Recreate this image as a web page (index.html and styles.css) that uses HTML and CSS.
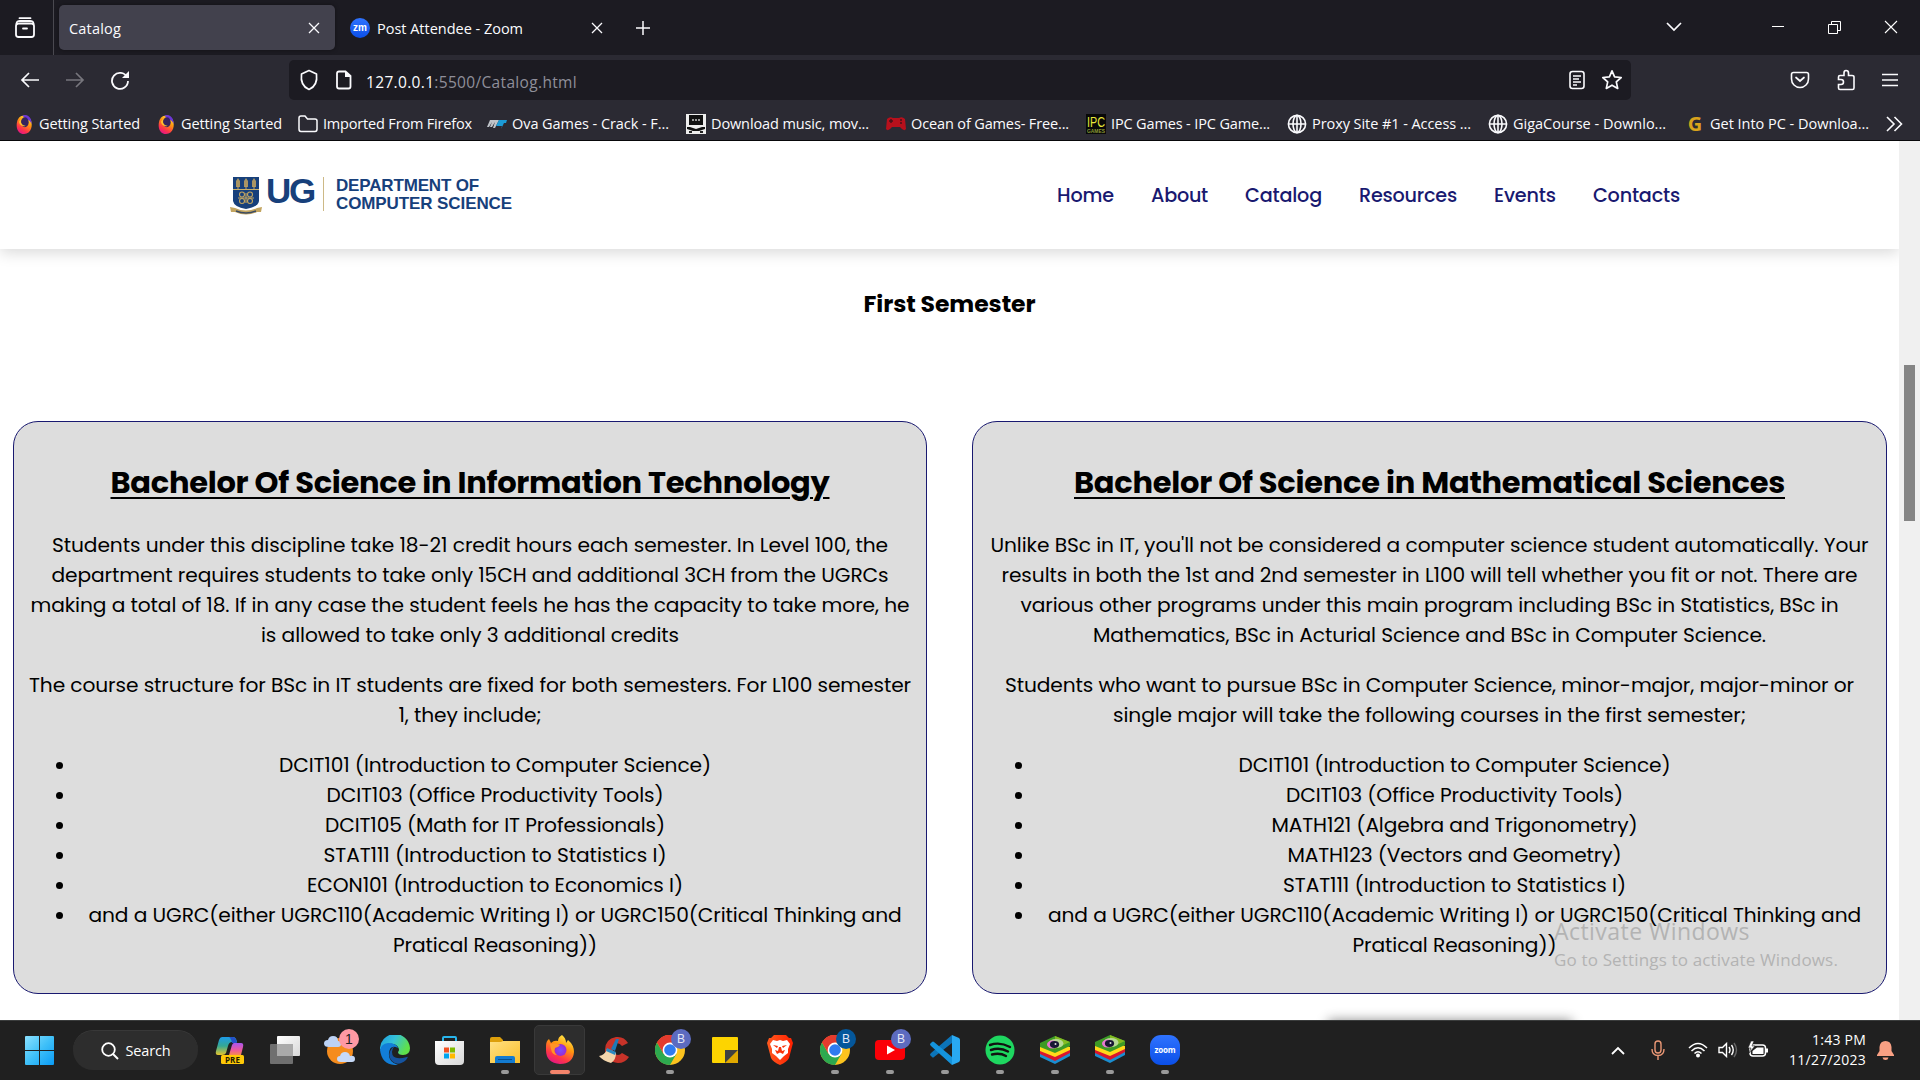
FILE: index.html
```html
<!DOCTYPE html>
<html lang="en">
<head>
<meta charset="utf-8">
<title>Catalog</title>
<link rel="stylesheet" href="styles.css">
</head>
<body>
<svg class="defs" width="0" height="0">
  <defs>
    <linearGradient id="gWin" x1="0" y1="0" x2="1" y2="1"><stop offset="0" stop-color="#8be1ff"/><stop offset=".5" stop-color="#3fc0f8"/><stop offset="1" stop-color="#0a9bf5"/></linearGradient>
    <linearGradient id="gFox" x1=".8" y1="0" x2=".3" y2="1"><stop offset="0" stop-color="#fff44f"/><stop offset=".4" stop-color="#ff980e"/><stop offset=".75" stop-color="#ff3647"/><stop offset="1" stop-color="#e31587"/></linearGradient>
    <radialGradient id="gOrb"><stop offset="0" stop-color="#7b4dff"/><stop offset="1" stop-color="#9a2bd0"/></radialGradient>
    <linearGradient id="gEdge" x1="0" y1="0" x2="1" y2=".4"><stop offset="0" stop-color="#1b9de2"/><stop offset=".5" stop-color="#35c1d8"/><stop offset="1" stop-color="#5fe04a"/></linearGradient>
    <linearGradient id="gCopA" x1="0" y1="0" x2="0" y2="1"><stop offset="0" stop-color="#1d9be8"/><stop offset=".5" stop-color="#35a894"/><stop offset="1" stop-color="#e6c52c"/></linearGradient>
    <linearGradient id="gCopB" x1="0" y1="0" x2="0" y2="1"><stop offset="0" stop-color="#a855f0"/><stop offset=".6" stop-color="#ee5a9a"/><stop offset="1" stop-color="#f58a50"/></linearGradient>
    <linearGradient id="gFolder" x1="0" y1="0" x2="1" y2="1"><stop offset="0" stop-color="#ffe083"/><stop offset="1" stop-color="#fbc02c"/></linearGradient>
    <linearGradient id="gGrey" x1="0" y1="0" x2="1" y2="1"><stop offset="0" stop-color="#fff"/><stop offset="1" stop-color="#d8d8d8"/></linearGradient>
    <linearGradient id="gZoom" x1="0" y1="0" x2="0" y2="1"><stop offset="0" stop-color="#2f73ff"/><stop offset="1" stop-color="#0b4fe8"/></linearGradient>
    <linearGradient id="gBrave" x1="0" y1="0" x2="1" y2="0"><stop offset="0" stop-color="#ff5a1f"/><stop offset="1" stop-color="#ff2000"/></linearGradient>
    <symbol id="foxmini" viewBox="0 0 20 24"><path d="M3 6C0 11 0 24 10 24C19 24 21 13 18 7C16 3 13 1 9 2C6 2 4 4 3 6Z" fill="url(#gFox)"/><path d="M8 2C13-1 20 4 19 12C18 9 16 7 14 7Z" fill="#6b35d9"/><ellipse cx="11" cy="10" rx="4.6" ry="6" fill="#35245c"/><path d="M7 5C5 9 7 14 12 14C9 16 4 13 4 9Z" fill="#ffc12e"/></symbol>
    <symbol id="globe" viewBox="0 0 20 20"><g fill="none" stroke="#fbfbfe" stroke-width="1.6"><circle cx="10" cy="10" r="8.6"/><ellipse cx="10" cy="10" rx="4" ry="8.6"/><path d="M1.5 10H18.5M10 1.5V18.5"/></g></symbol>
    <symbol id="cross" viewBox="0 0 12 12"><path d="M1 1L11 11M11 1L1 11" stroke="#fbfbfe" stroke-width="1.3" fill="none"/></symbol>
    <symbol id="chrome" viewBox="0 0 30 30"><circle cx="15" cy="15" r="15" fill="#fcc31e"/><path d="M15 15L2 7.5A15 15 0 0 1 28 7.5H15Z" fill="#e33b2e"/><path d="M2 7.5A15 15 0 0 0 15 30L21.5 18.7L15 15L8.5 18.7Z" fill="#2da94f"/><path d="M15 7.5H28A15 15 0 0 0 2 7.5L8.5 18.7Z" fill="#e33b2e"/><circle cx="15" cy="15" r="7.4" fill="#fff"/><circle cx="15" cy="15" r="5.8" fill="#2f7bf0"/></symbol>
    <symbol id="stacks" viewBox="0 0 30 28"><path d="M0 17L15 11L30 17V20L15 28L0 21Z" fill="#1b8ed0"/><path d="M0 14L15 8L30 14V17L15 25L0 18Z" fill="#d9162d"/><path d="M0 11L15 5L30 11V14L15 21L0 15Z" fill="#ffd91a"/><path d="M0 7L15 0L30 6V10L15 17L0 11Z" fill="#3d9b25"/><path d="M15 0L30 6L15 13Z" fill="#83bb22"/><ellipse cx="16" cy="7.5" rx="7.5" ry="4.600" fill="#b7d995"/><ellipse cx="12.500" cy="8.500" rx="5.500" ry="4" fill="#e67ad0"/><ellipse cx="14.500" cy="8.500" rx="4.600" ry="3.400" fill="#171733"/><circle cx="15.500" cy="8" r="1" fill="#ddd"/></symbol>
  </defs>
</svg>

<div class="tabbar">
  <div class="archive"><svg width="22" height="22" viewBox="0 0 22 22"><g fill="none" stroke="#fbfbfe" stroke-width="1.8" stroke-linecap="round"><rect x="2" y="6.5" width="18" height="13.5" rx="2.5"/><path d="M2.5 6.5C3 4 4 4 6 4H16C18 4 19 4 19.5 6.5M5.5 1.2H16.5M9 11.5H13"/></g></svg></div>
  <div class="tab active"><span class="tabtext" data-w="52">Catalog</span><svg class="x" width="12" height="12"><use href="#cross"/></svg></div>
  <div class="tab second"><svg width="20" height="20" viewBox="0 0 20 20"><circle cx="10" cy="10" r="10" fill="url(#gZoom)"/><text x="10" y="13" text-anchor="middle" class="zm">zm</text></svg><span class="tabtext" data-w="146">Post Attendee - Zoom</span><svg class="x" width="12" height="12"><use href="#cross"/></svg></div>
  <svg class="plus" width="16" height="16" viewBox="0 0 16 16"><path d="M8 1V15M1 8H15" stroke="#fbfbfe" stroke-width="1.5"/></svg>
  <div class="wincontrols">
    <svg width="16" height="10" viewBox="0 0 16 10"><path d="M1 1L8 8L15 1" fill="none" stroke="#fbfbfe" stroke-width="1.7"/></svg>
    <svg width="12" height="12" viewBox="0 0 12 12"><path d="M0 5.5H12" stroke="#fff"/></svg>
    <svg width="13" height="13" viewBox="0 0 13 13"><path d="M.5 3.5H9.5V12.5H.5ZM3.5 3.5V.5H12.5V9.5H9.5" fill="none" stroke="#fff"/></svg>
    <svg width="14" height="14" viewBox="0 0 14 14"><path d="M1 1L13 13M13 1L1 13" stroke="#fff" stroke-width="1.1"/></svg>
  </div>
</div>

<div class="navbar">
  <div class="navleft">
    <svg width="20" height="20" viewBox="0 0 20 20"><path d="M19 10H2M9 3L2 10L9 17" fill="none" stroke="#fbfbfe" stroke-width="1.7"/></svg>
    <svg width="20" height="20" viewBox="0 0 20 20"><path d="M1 10H18M11 3L18 10L11 17" fill="none" stroke="#77767d" stroke-width="1.7"/></svg>
    <svg width="20" height="20" viewBox="0 0 20 20"><path d="M17 7A8 8 0 1 0 18 11" fill="none" stroke="#fbfbfe" stroke-width="1.8"/><path d="M19 1V8H12Z" fill="#fbfbfe"/></svg>
  </div>
  <div class="urlbar">
    <svg width="20" height="22" viewBox="0 0 20 22"><path d="M10 1.5L17.5 5C18.5 13 16 18 10 20.5C4 18 1.500 13 2.500 5Z" fill="none" stroke="#fbfbfe" stroke-width="1.7" stroke-linejoin="round"/></svg>
    <svg class="page" width="16" height="20" viewBox="0 0 16 20"><path d="M3 1.500H9.500L14.500 6V16.500Q14.500 18.500 12.500 18.500H3Q1 18.500 1 16.500V3.500Q1 1.500 3 1.500Z" fill="none" stroke="#fbfbfe" stroke-width="1.8"/><path d="M9 1V7H15Z" fill="#fbfbfe"/></svg>
    <span class="url" data-w="211"><b>127.0.0.1</b>:5500/Catalog.html</span>
    <svg class="reader" width="16" height="20" viewBox="0 0 16 20"><rect x="1" y="1.500" width="14" height="17" rx="2.500" fill="none" stroke="#fbfbfe" stroke-width="1.600"/><path d="M4 6H12M4 9H10M4 12H12M4 15H8" stroke="#fbfbfe" stroke-width="1.300"/></svg>
    <svg width="22" height="22" viewBox="0 0 22 22"><path d="M11 1.800L13.600 7.800L20.200 8.500L15.300 12.900L16.700 19.400L11 16.200L5.300 19.400L6.700 12.900L1.800 8.500L8.400 7.800Z" fill="none" stroke="#fbfbfe" stroke-width="1.700" stroke-linejoin="round"/></svg>
  </div>
  <div class="navright">
    <svg width="20" height="18" viewBox="0 0 20 18"><path d="M3.500 1.500H16.500Q18.500 1.500 18.500 3.500V8A8.500 8.500 0 0 1 1.500 8V3.500Q1.500 1.500 3.500 1.500Z" fill="none" stroke="#fbfbfe" stroke-width="1.600"/><path d="M6 6.500L10 10L14 6.500" fill="none" stroke="#fbfbfe" stroke-width="1.700" stroke-linecap="round"/></svg>
    <svg width="20" height="22" viewBox="0 0 20 22"><path d="M4 20.500Q2.500 20.500 2.500 19V15.500H5Q7.500 15.500 7.500 13Q7.500 10.500 5 10.500H2.500V8Q2.500 6.500 4 6.500H8V4Q8 1.500 10 1.500Q12.500 1.500 12.500 4V6.500H16Q18 6.500 18 8V19Q18 20.500 16.500 20.500Z" fill="none" stroke="#fbfbfe" stroke-width="1.600"/></svg>
    <svg width="16" height="14" viewBox="0 0 16 14"><path d="M0 1.500H16M0 7H16M0 12.500H16" stroke="#fbfbfe" stroke-width="1.500"/></svg>
  </div>
</div>

<div class="bookmarks">
  <div class="bm"><svg width="20" height="20"><use href="#foxmini"/></svg><span data-w="101">Getting Started</span></div>
  <div class="bm"><svg width="20" height="20"><use href="#foxmini"/></svg><span data-w="101">Getting Started</span></div>
  <div class="bm folder"><svg width="20" height="20" viewBox="0 0 20 20"><path d="M1 15V4Q1 2 3 2H7L9.500 5H17Q19 5 19 7V15Q19 17.500 17 17.500H3Q1 17.500 1 15Z" fill="none" stroke="#fbfbfe" stroke-width="1.500"/></svg><span data-w="149">Imported From Firefox</span></div>
  <div class="bm"><svg width="20" height="20" viewBox="0 0 20 20"><path d="M3 6H12L8 14H6L8 8L5 13H3L5 8L2 13H0Z" fill="#bfc3c9"/><path d="M12 6H20L19 9H17L14 15L15 12H9Z" fill="#1b9bd7"/></svg><span data-w="157">Ova Games - Crack - F...</span></div>
  <div class="bm"><svg width="20" height="20" viewBox="0 0 20 20"><path d="M0 0H20V20H0Z" fill="#eee"/><path d="M3 1H17V11H3ZM1 13H4L10 15L16 13H19V15L13 17H7L1 15Z" fill="#111"/><path d="M6 5H8V7H6ZM9 5H11V7H9ZM12 5H14V7H12Z" fill="#999"/><path d="M3 17H6V19H3ZM14 17H17V19H14Z" fill="#222"/></svg><span data-w="158">Download music, mov...</span></div>
  <div class="bm"><svg width="20" height="20" viewBox="0 0 20 20"><path d="M1 5Q4 2 7 4H13Q16 2 19 5L20 15Q18 18 14 13H6Q2 18 0 15Z" fill="#b8101c"/><path d="M3 7H7M5 5V9M14 6H16M14 9H16" stroke="#4b101a" stroke-width="1.500"/></svg><span data-w="158">Ocean of Games- Free...</span></div>
  <div class="bm"><svg width="20" height="20" viewBox="0 0 20 20"><path d="M0 0H20V20H0Z" fill="#080808"/><text x="1" y="13" class="ipc" textLength="18" lengthAdjust="spacingAndGlyphs">IPC</text><text x="1" y="18.500" class="ipcs" textLength="18" lengthAdjust="spacingAndGlyphs">GAMES</text></svg><span data-w="159">IPC Games - IPC Game...</span></div>
  <div class="bm"><svg width="20" height="20"><use href="#globe"/></svg><span data-w="159">Proxy Site #1 - Access ...</span></div>
  <div class="bm giga"><svg width="20" height="20"><use href="#globe"/></svg><span data-w="153">GigaCourse - Downlo...</span></div>
  <div class="bm"><b class="gicon">G</b><span data-w="159">Get Into PC - Downloa...</span></div>
  <svg class="more" width="17" height="16" viewBox="0 0 17 16"><path d="M1 1L8 8L1 15M8.500 1L15.500 8L8.500 15" fill="none" stroke="#fbfbfe" stroke-width="1.600"/></svg>
</div>

<div class="viewport">
  <div class="content">
    <header class="site">
      <div class="logo">
        <svg width="32" height="38" viewBox="0 0 32 38"><path d="M3 0H29V24Q28 30 16 32Q4 30 3 24Z" fill="#17407b"/><path d="M3 12.500H29" stroke="#c8b06c" stroke-width="1"/><g fill="#c3a560"><path d="M8 1L10 4L10 10H6V4ZM16 1L18 4V10H14V4ZM24 1L26 4V10H22V4Z" opacity=".85"/><path d="M7.500 9H8.500V12H7.500ZM15.500 9H16.500V12H15.500ZM23.500 9H24.500V12H23.500Z"/></g><g fill="none" stroke="#c3a560" stroke-width="1.100"><circle cx="12" cy="17.500" r="2.500"/><circle cx="20" cy="17.500" r="2.500"/><circle cx="12" cy="24" r="2.500"/><circle cx="20" cy="24" r="2.500"/><path d="M8 21H24M16 16V26"/></g><path d="M0 30L5 31Q16 36 27 31L32 30L31 35L27 35Q16 40 5 35L1 35Z" fill="#c3a560"/><path d="M6 34Q16 38 26 34" fill="none" stroke="#3b4b63" stroke-width="1.500"/></svg>
        <span class="ug" data-w="48">UG</span>
        <div class="dept"><span data-w="143">DEPARTMENT OF</span><br><span data-w="176">COMPUTER SCIENCE</span></div>
      </div>
      <nav>
        <a data-w="57">Home</a><a data-w="57">About</a><a data-w="77">Catalog</a><a data-w="98">Resources</a><a data-w="62">Events</a><a data-w="87">Contacts</a>
      </nav>
    </header>
    <h3><span data-w="172">First Semester</span></h3>
    <main class="cards">
      <section class="card">
        <h2><span data-w="719">Bachelor Of Science in Information Technology</span></h2>
        <p><span data-w="836">Students under this discipline take 18-21 credit hours each semester. In Level 100, the</span><br>
        <span data-w="837">department requires students to take only 15CH and additional 3CH from the UGRCs</span><br>
        <span data-w="879">making a total of 18. If in any case the student feels he has the capacity to take more, he</span><br>
        <span data-w="418">is allowed to take only 3 additional credits</span></p>
        <p><span data-w="882">The course structure for BSc in IT students are fixed for both semesters. For L100 semester</span><br>
        <span data-w="143">1, they include;</span></p>
        <ul>
          <li><span data-w="432">DCIT101 (Introduction to Computer Science)</span></li>
          <li><span data-w="337">DCIT103 (Office Productivity Tools)</span></li>
          <li><span data-w="340">DCIT105 (Math for IT Professionals)</span></li>
          <li><span data-w="343">STAT111 (Introduction to Statistics I)</span></li>
          <li><span data-w="376">ECON101 (Introduction to Economics I)</span></li>
          <li><span data-w="813">and a UGRC(either UGRC110(Academic Writing I) or UGRC150(Critical Thinking and</span><br><span data-w="204">Pratical Reasoning))</span></li>
        </ul>
      </section>
      <section class="card">
        <h2><span data-w="711">Bachelor Of Science in Mathematical Sciences</span></h2>
        <p><span data-w="878">Unlike BSc in IT, you'll not be considered a computer science student automatically. Your</span><br>
        <span data-w="856">results in both the 1st and 2nd semester in L100 will tell whether you fit or not. There are</span><br>
        <span data-w="818">various other programs under this main program including BSc in Statistics, BSc in</span><br>
        <span data-w="673">Mathematics, BSc in Acturial Science and BSc in Computer Science.</span></p>
        <p><span data-w="849">Students who want to pursue BSc in Computer Science, minor-major, major-minor or</span><br>
        <span data-w="633">single major will take the following courses in the first semester;</span></p>
        <ul>
          <li><span data-w="432">DCIT101 (Introduction to Computer Science)</span></li>
          <li><span data-w="337">DCIT103 (Office Productivity Tools)</span></li>
          <li><span data-w="366">MATH121 (Algebra and Trigonometry)</span></li>
          <li><span data-w="334">MATH123 (Vectors and Geometry)</span></li>
          <li><span data-w="343">STAT111 (Introduction to Statistics I)</span></li>
          <li><span data-w="813">and a UGRC(either UGRC110(Academic Writing I) or UGRC150(Critical Thinking and</span><br><span data-w="204">Pratical Reasoning))</span></li>
        </ul>
      </section>
    </main>
    <div class="nextbox"></div>
  </div>
  <div class="scroll"><div class="thumb"></div></div>
  <div class="watermark"><div class="wm1"><span data-w="196">Activate Windows</span></div><div class="wm2"><span data-w="284">Go to Settings to activate Windows.</span></div></div>
</div>

<footer class="taskbar">
  <div class="app"><svg width="29" height="29" viewBox="0 0 29 29"><path d="M0 1Q0 0 1 0H14V14H0ZM15 0H28Q29 0 29 1V14H15ZM0 15H14V29H1Q0 29 0 28ZM15 15H29V28Q29 29 28 29H15Z" fill="url(#gWin)"/></svg></div>
  <div class="search"><svg width="18" height="18" viewBox="0 0 18 18"><circle cx="7.500" cy="7.500" r="6.300" fill="none" stroke="#fff" stroke-width="1.800"/><path d="M12 12L17 17" stroke="#fff" stroke-width="2"/></svg><span data-w="45">Search</span></div>
  <div class="app"><svg width="30" height="30" viewBox="0 0 30 30"><path d="M7 2H18Q21 2 22 7H17Q14 7 13 11L11 18Q10 20 7 20H3Q0 20 1 16L4 5Q5 2 7 2Z" fill="url(#gCopA)"/><path d="M14 2H18Q21 2 22 8H17Q16 3 14 2Z" fill="#2450c8"/><path d="M19 8H26Q29 8 28 12L26 20H14L17 10Q18 8 19 8Z" fill="url(#gCopB)"/><rect x="6" y="20" width="23" height="9" rx="1.500" fill="#ffc907"/><text x="17.500" y="27.500" text-anchor="middle" class="pre">PRE</text></svg></div>
  <div class="app"><svg width="30" height="28" viewBox="0 0 30 28"><rect x="7" y="0" width="23" height="20" rx="1" fill="url(#gGrey)"/><rect x="0" y="8" width="23" height="20" rx="1" fill="#6f6f6f"/><path d="M7 8H23V20H7Z" fill="#aaa"/></svg></div>
  <div class="app"><svg width="32" height="30" viewBox="0 0 32 30"><circle cx="16" cy="16" r="13" fill="#f58c1d"/><path d="M5 12Q0 12 0 8.500Q0 5 4 5Q5 1 9 1Q14 1 14 6Q17 6 17 9Q17 12 14 12Z" fill="#bcd2f5"/><path d="M17 27Q13 27 13 24Q13 21 16 21Q17 17 21 17Q25 17 26 21Q31 20 31 24Q31 27 28 27Z" fill="#c6d9f8"/></svg><b class="badge pink">1</b></div>
  <div class="app"><svg width="30" height="30" viewBox="0 0 30 30"><path d="M0 15A15 15 0 0 1 30 13Q30 20 23 20Q18 20 18 17Q20 15 18 12Q15 8 9 9Q3 10 0 15Z" fill="url(#gEdge)"/><path d="M0 15Q1 9 8 8Q16 8 18 13Q10 9 9 18Q8 27 18 30Q2 31 0 15Z" fill="#127ed8"/><path d="M13 12Q6 20 12 26Q18 32 26 25Q29 21 27 22Q12 26 12 17Q12 14 14 12Z" fill="#15539f"/></svg></div>
  <div class="app"><svg width="29" height="29" viewBox="0 0 29 29"><path d="M8 7V2Q8 1 9 1H20Q21 1 21 2V7" fill="none" stroke="#28b5ec" stroke-width="2"/><path d="M0 5H29V25Q29 29 25 29H4Q0 29 0 25Z" fill="url(#gGrey)"/><path d="M9 11.500H14V16.500H9Z" fill="#f25022"/><path d="M15 11.500H20V16.500H15Z" fill="#7fba00"/><path d="M9 17.500H14V22.500H9Z" fill="#00a4ef"/><path d="M15 17.500H20V22.500H15Z" fill="#ffb900"/></svg></div>
  <div class="app"><svg width="30" height="26" viewBox="0 0 30 26"><path d="M0 2Q0 0 2 0H10L13 3V8H0Z" fill="#dd9f0b"/><path d="M0 5H11L13 4H30V26H0Z" fill="url(#gFolder)"/><path d="M5 26V21Q5 19 7 19H23Q25 19 25 21V26Z" fill="#137bd0"/><path d="M8 22.500H22" stroke="#07508f"/></svg><i class="dot"></i></div>
  <div class="app current"><svg width="30" height="30" viewBox="0 0 30 30"><path d="M1 11Q1 6 4 4L6 8Q9 5 13 6Q13 2 17 0Q21 3 21 8L23 5Q29 10 29 17Q28 29 15 29Q1 28 1 15Z" fill="url(#gFox)"/><circle cx="15.500" cy="15" r="6" fill="url(#gOrb)"/><path d="M5 9Q8 8 12 9L15 10Q14 12 10 13Q8 17 12 20Q7 20 6 14Z" fill="#ff9426"/></svg><i class="dot"></i></div>
  <div class="app"><svg width="31" height="30" viewBox="0 0 31 30"><path d="M29 8Q25 1 17 2Q6 4 6 15Q7 27 19 28Q26 28 30 22L23 18Q19 22 15 18Q12 12 16 9Q20 7 23 11Z" fill="#c83329"/><path d="M17 4L20 4L16 16L12 14Z" fill="#1c7bb8"/><path d="M8 14L17 18Q17 25 12 28Q4 26 0 21Q6 20 8 14Z" fill="#f3d6ac"/><path d="M8 13L17 17L16 20L7 16Z" fill="#2d8bc2"/></svg></div>
  <div class="app"><svg width="30" height="30"><use href="#chrome"/></svg><b class="badge">B</b><i class="dot"></i></div>
  <div class="app"><svg width="26" height="26" viewBox="0 0 26 26"><rect width="26" height="26" rx="1" fill="#fdd400"/><path d="M13 26L26 13V26Z" fill="#e0a800"/><path d="M13 13H26L13 26Z" fill="#404040"/></svg></div>
  <div class="app"><svg width="26" height="30" viewBox="0 0 26 30"><path d="M7 0H19L22 3L24 3L26 8L22 23Q20 27 13 30Q6 27 4 23L0 8L2 3L4 3Z" fill="url(#gBrave)"/><path d="M6 5L10 6L13 5L16 6L20 5L23 9L21 14L21 18L17 21L13 25L9 21L5 18L5 14L3 9Z" fill="#fff"/><path d="M6 10L11 11L10 13ZM20 10L15 11L16 13ZM12 12H14L15 16L18 15L16 19L13 17.500L10 19L8 15L11 16Z" fill="#f8330a"/></svg></div>
  <div class="app"><svg width="30" height="30"><use href="#chrome"/></svg><b class="badge blue">B</b><i class="dot"></i></div>
  <div class="app"><svg width="30" height="22" viewBox="0 0 30 22"><rect y="1" width="30" height="20" rx="4" fill="#fb0007"/><path d="M12 6.500L20 11L12 15.500Z" fill="#fff"/></svg><b class="badge">B</b><i class="dot"></i></div>
  <div class="app"><svg width="30" height="30" viewBox="0 0 30 30"><path d="M22 0L29 3Q30 4 30 5V25Q30 26 29 27L22 30Z" fill="#29a9f2"/><path d="M22 0V8L4 22Q3 23 2 22L0 20Q0 19 1 18Z" fill="#0c74b8"/><path d="M22 30V22L4 7Q3 6 2 7L0 9Q0 10 1 11Z" fill="#1493dc"/></svg><i class="dot"></i></div>
  <div class="app"><svg width="30" height="30" viewBox="0 0 30 30"><circle cx="15" cy="15" r="14.500" fill="#1ed760"/><path d="M5 10Q15 6.500 25 12M6 15Q15 12 23 16.500M7 19.500Q15 17.500 21 21" fill="none" stroke="#111" stroke-width="2.400" stroke-linecap="round"/></svg><i class="dot"></i></div>
  <div class="app"><svg width="30" height="28"><use href="#stacks"/></svg><i class="dot"></i></div>
  <div class="app"><svg class="up" width="30" height="28"><use href="#stacks"/></svg><i class="dot"></i></div>
  <div class="app"><svg width="30" height="30" viewBox="0 0 30 30"><rect width="30" height="30" rx="11" fill="url(#gZoom)"/><text x="15" y="17.500" text-anchor="middle" class="zoom" textLength="21">zoom</text></svg><i class="dot"></i></div>
  <div class="tray">
    <svg class="caret" width="14" height="9" viewBox="0 0 14 9"><path d="M1 8L7 2L13 8" fill="none" stroke="#fff" stroke-width="1.800"/></svg>
    <svg class="mic" width="14" height="20" viewBox="0 0 14 20"><g fill="none" stroke="#eb9876" stroke-width="1.400"><rect x="4" y="1" width="6" height="12" rx="3"/><path d="M1 9Q1 15.500 7 15.500Q13 15.500 13 9M7 15.500V20"/></g></svg>
    <svg class="wifi" width="20" height="16" viewBox="0 0 20 16"><g fill="none" stroke="#fff" stroke-width="1.500"><path d="M1 6Q10-3 19 6M3.500 9Q10 2.500 16.500 9M6.500 11.500Q10 8 13.500 11.500"/></g><circle cx="10" cy="13.500" r="2" fill="#fff"/></svg>
    <svg class="vol" width="20" height="16" viewBox="0 0 20 16"><g fill="none" stroke="#fff" stroke-width="1.400"><path d="M1 5.500H4.500L8.500 1.500V14.500L4.500 10.500H1ZM11 5Q13 8 11 11M13.500 3Q17 8 13.500 13"/><path d="M16 1Q21 8 16 15" stroke="#666"/></g></svg>
    <svg class="bat" width="20" height="18" viewBox="0 0 20 18"><rect x="2" y="4" width="15.500" height="11" rx="3" fill="none" stroke="#fff" stroke-width="1.500"/><path d="M4.500 13V10L9 6.500H15.500V13ZM18 7.500H20V11.500H18Z" fill="#fff"/><path d="M3 0L0 7H3L1 12L7 5H4L6 0Z" fill="#fff" stroke="#202020" stroke-width=".6"/></svg>
    <div class="clock"><span data-w="54">1:43 PM</span><span data-w="77">11/27/2023</span></div>
    <svg class="bell" width="17" height="19" viewBox="0 0 17 19"><path d="M8.500 0Q14 0 14.500 6V10L17 14V15H0V14L2.500 10V6Q3 0 8.500 0ZM5.500 16.500H11.500Q11 19 8.500 19Q6 19 5.500 16.500Z" fill="#f9a083"/></svg>
  </div>
</footer>
<script src="fit.js"></script>
</body>
</html>
```
FILE: styles.css
```css
* { box-sizing: border-box; }
body { margin: 0; width: 1920px; height: 1080px; overflow: hidden; display: flex; flex-direction: column; background: #fff; font-family: "Open Sans", "Noto Sans", sans-serif; font-size: 14.5px; color: #fbfbfe; }
svg { display: block; flex: none; }
.defs { position: absolute; }
[data-w] { display: inline-block; white-space: nowrap; }

.tabbar { height: 55px; flex: none; background: #1c1b22; display: flex; align-items: center; }
.archive { width: 54px; height: 55px; border-right: 1px solid #4a4950; display: flex; align-items: center; padding-left: 14px; }
.tab { height: 45px; display: flex; align-items: center; border-radius: 5px; }
.tab.active { margin-left: 5px; width: 276px; padding: 0 15px 0 10px; background: #42414d; box-shadow: 0 0 4px rgba(0,0,0,.4); }
.tab.second { margin-left: 4px; width: 276px; padding: 0 12px 0 11px; gap: 7px; }
.tabtext { padding-top: 2px; }
.tab .x { margin-left: auto; }
.zm { font: bold 10px "Liberation Sans", sans-serif; fill: #fff; }
.plus { margin-left: 20px; }
.wincontrols { margin-left: auto; display: flex; align-items: center; padding: 0 22px 1px 0; }
.wincontrols svg:nth-child(2) { margin-left: 90px; }
.wincontrols svg:nth-child(3) { margin-left: 44px; }
.wincontrols svg:nth-child(4) { margin-left: 43px; }

.navbar { height: 50px; flex: none; background: #2b2a33; display: flex; align-items: center; }
.navleft { width: 289px; display: flex; gap: 25px; padding-left: 20px; }
.urlbar { width: 1342px; height: 40px; border-radius: 5px; background: #1c1b22; display: flex; align-items: center; padding: 0 8px 0 10px; }
.page { margin-left: 17px; }
.url { margin-left: 14px; font-size: 15.5px; color: #8f8f9a; padding-top: 4px; }
.url b { font-weight: 400; color: #fbfbfe; }
.reader { margin: 0 16px 0 auto; }
.navright { display: flex; align-items: center; gap: 26px; padding-left: 159px; }

.bookmarks { height: 36px; flex: none; background: #2b2a33; border-bottom: 1px solid #08080a; display: flex; align-items: center; padding: 2px 17px 0 14px; gap: 16px; }
.bm { display: flex; align-items: center; gap: 5px; }
.bookmarks .bm:nth-child(n+4) { margin-right: 1px; }
.bookmarks .folder { margin-right: -1px; }
.giga { width: 187px; }
.more { margin-left: auto; }
.ipc { font: 14px "Liberation Sans", sans-serif; fill: #e9e83a; }
.ipcs { font: bold 5px "Liberation Sans", sans-serif; fill: #8a9a35; }
.gicon { width: 20px; font-size: 20px; line-height: 28px; color: #d9a31c; text-align: center; }

.viewport { position: relative; height: 879px; flex: none; display: flex; overflow: hidden; }
.content { width: 1899px; color: #000; font-family: Poppins, Inter, sans-serif; }
.scroll { width: 21px; background: #f0f0f0; padding: 224px 5px 0; }
.thumb { height: 156px; background: #858585; }
.site { height: 108px; display: flex; align-items: center; padding-left: 230px; box-shadow: 0 4px 14px rgba(0,0,0,.15); clip-path: inset(0 0 -30px 0); }
.logo { display: flex; height: 38px; width: 827px; color: #17407b; font-family: "Liberation Sans", sans-serif; font-weight: bold; margin-bottom: -2px; }
.ug { margin-left: 4px; width: 50px; font-size: 35px; line-height: 28px; }
.dept { height: 34px; margin-left: 7px; border-left: 1px solid #cdb986; padding-left: 12px; font-size: 17px; line-height: 18px; white-space: nowrap; margin-top: 0; }
nav { display: flex; gap: 37px; color: #191970; font-size: 19.2px; font-weight: 500; }
h3 { margin: 37px 0 0; height: 35px; line-height: 35px; font-size: 23.5px; text-align: center; }
.cards { display: flex; justify-content: space-between; padding: 100px 12px 0 13px; }
.card { width: 914px; height: 573px; border: 1px solid #191970; border-radius: 25px; background: #ddd; padding: 14px 12px; text-align: center; font-size: 20.2px; line-height: 30px; }
.card:last-child { width: 915px; }
h2 { margin: 24px 0 25px; font-size: 30.5px; line-height: 45px; }
h2 span { text-decoration: underline; text-decoration-thickness: 2px; text-underline-offset: 4px; }
.card p { margin: 0 0 20px; }
.card span { vertical-align: top; }
.card ul { margin: 0; padding-left: 50px; }
.card li::marker { font-size: 19px; }
.nextbox { position: absolute; left: 1330px; top: 881px; width: 240px; height: 30px; box-shadow: 0 0 12px 2px rgba(0,0,0,.45); }
.watermark { position: absolute; left: 1554px; top: 774px; color: #b3b3b3; }
.wm1 { font-size: 23px; line-height: 32px; }
.wm2 { font-size: 17px; line-height: 26px; }

.taskbar { height: 60px; flex: none; background: #202020; border-top: 1px solid #3a3c3c; display: flex; align-items: center; padding: 0 0 1px 12px; }
.app { position: relative; width: 55px; height: 50px; display: flex; align-items: center; justify-content: center; }
.app.current::before { content: ""; position: absolute; inset: 0 2px; border: 1px solid #393939; border-radius: 5px; background: #2d2d2d; }
.app svg { position: relative; }
.app .up { top: -1px; }
.search { width: 125px; height: 40px; margin: 0 4px 0 6px; border-radius: 20px; background: #2d2d2d; border-top: 1px solid #383838; display: flex; align-items: center; justify-content: center; gap: 7px; padding-right: 5px; padding-left: 5px; color: #fff; }
.badge { position: absolute; left: 29px; top: 4px; width: 20px; height: 20px; border-radius: 50%; background: #5c6bc0; color: #e4e7f7; font: 12px/20px "Liberation Sans", sans-serif; text-align: center; }
.badge.blue { background: #04579b; }
.badge.pink { left: 27px; background: #ff99a4; color: #222; font-size: 14px; }
.dot { position: absolute; left: 24px; bottom: 1px; width: 8px; height: 4px; border-radius: 2px; background: #9a9a9a; }
.current .dot { left: 18px; width: 20px; background: #f4846b; }
.pre { font: bold 8px "Open Sans", sans-serif; fill: #221b00; }
.zoom { font: bold 8px "Open Sans", sans-serif; fill: #fff; }
.tray { margin-left: auto; display: flex; align-items: center; padding-right: 26px; color: #fff; }
.mic { margin-left: 26px; }
.wifi { margin-left: 23px; }
.vol { margin-left: 10px; }
.bat { margin-left: 10px; }
.clock { width: 98px; display: flex; flex-direction: column; align-items: flex-end; font-size: 14px; line-height: 20px; }
.bell { margin-left: 11px; }
```
FILE: fit.js
```js
document.fonts.ready.then(function () {
  document.querySelectorAll("[data-w]").forEach(function (el) {
    var range = document.createRange();
    range.selectNodeContents(el);
    var natural = range.getBoundingClientRect().width;
    var n = el.textContent.length;
    el.style.letterSpacing = ((el.dataset.w - natural) / n).toFixed(3) + "px";
  });
});
```
